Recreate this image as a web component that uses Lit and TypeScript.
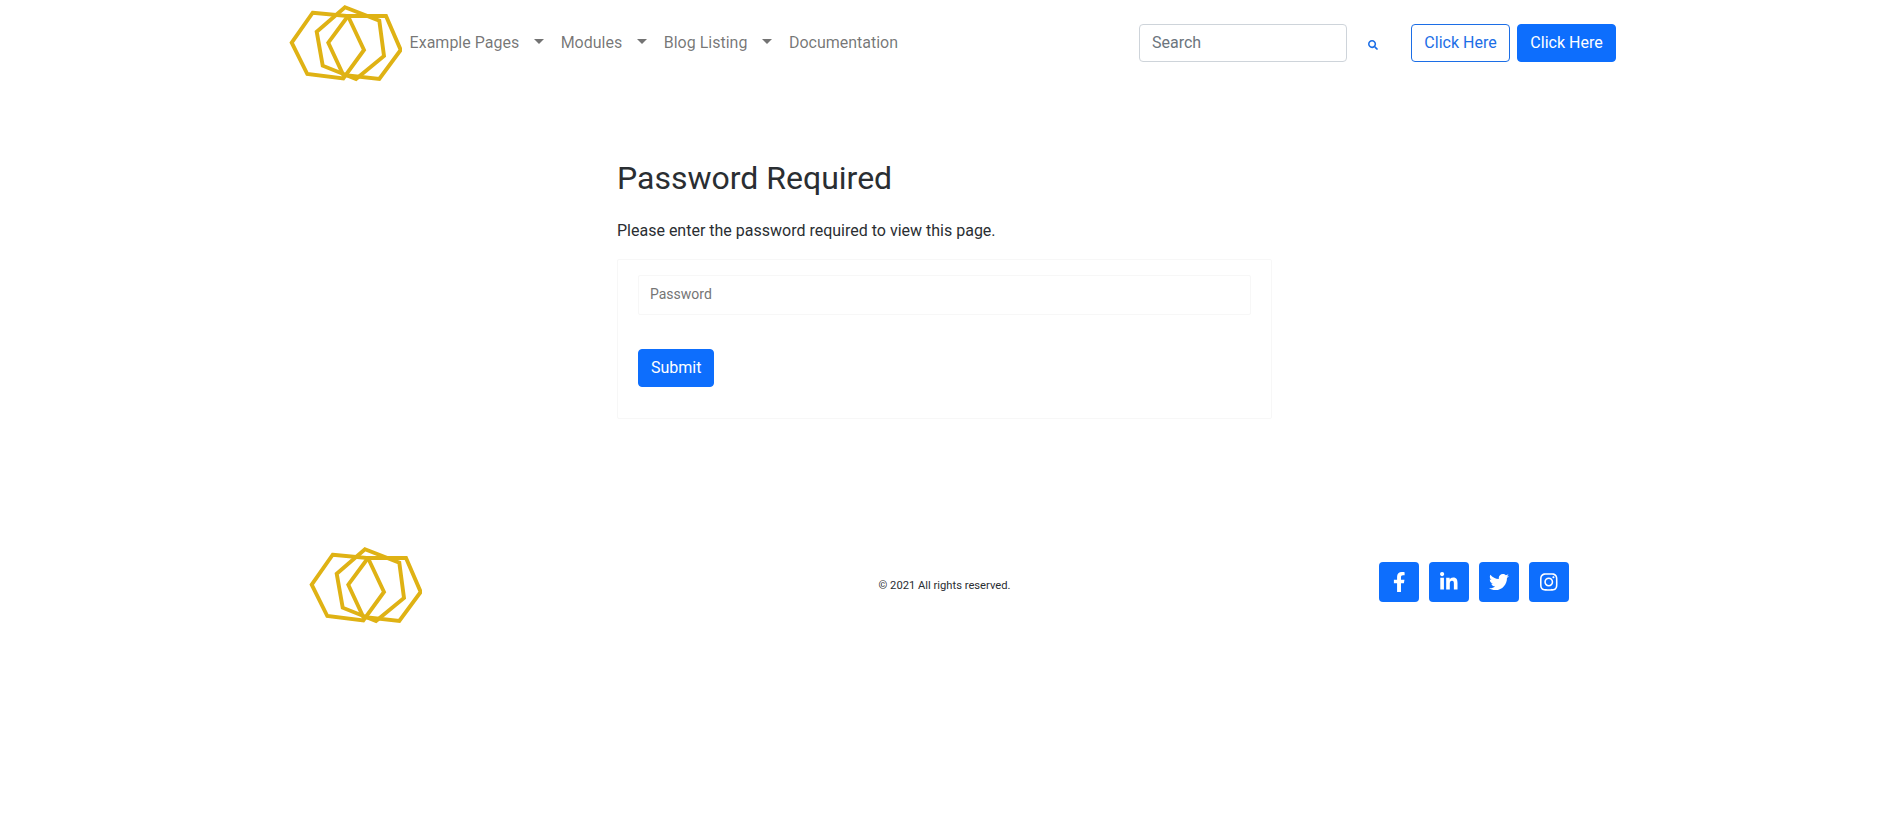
import { LitElement, html, css, svg } from "lit";
import { customElement } from "lit/decorators.js";

const logo = () => html`<svg class="logo" viewBox="285 0 117 86" aria-hidden="true">
  <g fill="none" stroke="#dfb214" stroke-width="3.9" stroke-linejoin="miter">
    ${svg`<polygon points="312.7,12.7 348,16 364,50 343.3,78.5 307.3,74 291.7,42.7" />
    <polygon points="345,7.3 379.3,20.7 384,56 356,79 322.7,65.7 316.7,31.7" />
    <polygon points="348,16 386,16 400.7,50 379.3,79 343.3,75 328.3,42.7" />`}
  </g>
</svg>`;

const icon = (vb: string, d: string, cls: string) =>
  html`<svg class=${cls} viewBox=${vb} aria-hidden="true"><path fill="currentColor" d=${d}></path></svg>`;

const SEARCH = "M505 442.7L405.3 343c-4.5-4.5-10.6-7-17-7H372c27.6-35.3 44-79.7 44-128C416 93.1 322.9 0 208 0S0 93.1 0 208s93.1 208 208 208c48.3 0 92.7-16.4 128-44v16.3c0 6.4 2.5 12.5 7 17l99.7 99.7c9.4 9.4 24.6 9.4 33.9 0l28.3-28.3c9.4-9.4 9.4-24.6.1-34zM208 336c-70.7 0-128-57.2-128-128 0-70.7 57.2-128 128-128 70.7 0 128 57.2 128 128 0 70.7-57.2 128-128 128z";
const FB = "M279.14 288l14.22-92.66h-88.91v-60.13c0-25.35 12.42-50.06 52.24-50.06h40.42V6.26S260.43 0 225.36 0c-73.22 0-121.08 44.38-121.08 124.72v70.62H22.89V288h81.39v224h100.17V288z";
const LI = "M100.28 448H7.4V148.9h92.88zM53.79 108.1C24.09 108.1 0 83.5 0 53.8a53.79 53.79 0 0 1 107.58 0c0 29.7-24.1 54.3-53.79 54.3zM447.9 448h-92.68V302.4c0-34.7-.7-79.2-48.29-79.2-48.29 0-55.69 37.7-55.69 76.7V448h-92.78V148.9h89.08v40.8h1.3c12.4-23.5 42.69-48.3 87.88-48.3 94 0 111.28 61.9 111.28 142.3V448z";
const TW = "M459.37 151.716c.325 4.548.325 9.097.325 13.645 0 138.72-105.583 298.558-298.558 298.558-59.452 0-114.68-17.219-161.137-47.106 8.447.974 16.568 1.299 25.34 1.299 49.055 0 94.213-16.568 130.274-44.832-46.132-.975-84.792-31.188-98.112-72.772 6.498.974 12.995 1.624 19.818 1.624 9.421 0 18.843-1.3 27.614-3.573-48.081-9.747-84.143-51.98-84.143-102.985v-1.299c13.969 7.797 30.214 12.67 47.431 13.319-28.264-18.843-46.781-51.005-46.781-87.391 0-19.492 5.197-37.36 14.294-52.954 51.655 63.675 129.3 105.258 216.365 109.807-1.624-7.797-2.599-15.918-2.599-24.04 0-57.828 46.782-104.934 104.934-104.934 30.213 0 57.502 12.67 76.67 33.137 23.715-4.548 46.456-13.32 66.599-25.34-7.798 24.366-24.366 44.833-46.132 57.827 21.117-2.273 41.584-8.122 60.426-16.243-14.292 20.791-32.161 39.308-52.628 54.253z";
const IG = "M224.1 141c-63.6 0-114.9 51.3-114.9 114.9s51.3 114.9 114.9 114.9S339 319.5 339 255.9 287.7 141 224.1 141zm0 189.6c-41.1 0-74.7-33.5-74.7-74.7s33.5-74.7 74.7-74.7 74.7 33.5 74.7 74.7-33.6 74.7-74.7 74.7zm146.4-194.3c0 14.9-12 26.8-26.8 26.8-14.9 0-26.8-12-26.8-26.8s12-26.8 26.8-26.8 26.8 12 26.8 26.8zm76.1 27.2c-1.7-35.9-9.9-67.7-36.2-93.9-26.2-26.2-58-34.4-93.9-36.2-37-2.1-147.9-2.1-184.9 0-35.8 1.7-67.6 9.9-93.9 36.1s-34.4 58-36.2 93.9c-2.1 37-2.1 147.9 0 184.9 1.7 35.9 9.9 67.7 36.2 93.9s58 34.4 93.9 36.2c37 2.1 147.9 2.1 184.9 0 35.9-1.7 67.7-9.9 93.9-36.2 26.2-26.2 34.4-58 36.2-93.9 2.1-37 2.1-147.8 0-184.8zM398.8 388c-7.8 19.6-22.9 34.7-42.6 42.6-29.5 11.7-99.5 9-132.1 9s-102.7 2.6-132.1-9c-19.6-7.8-34.7-22.9-42.6-42.6-11.7-29.5-9-99.5-9-132.1s-2.6-102.7 9-132.1c7.8-19.6 22.9-34.7 42.6-42.6 29.5-11.7 99.5-9 132.1-9s102.7-2.6 132.1 9c19.6 7.8 34.7 22.9 42.6 42.6 11.7 29.5 9 99.5 9 132.1s2.7 102.7-9 132.1z";

@customElement("app-root")
export class AppRoot extends LitElement {
  static styles = css`
    :host {
      display: block;
      min-height: 832px;
      background: #fff;
      color: #2a2e32;
      font-family: Roboto, "Liberation Sans", sans-serif;
      font-size: 16px;
      line-height: 24px;
    }
    * { box-sizing: border-box; }
    .top {
      display: flex;
      align-items: center;
      height: 86px;
      padding: 0 273px 0 285px;
    }
    .logo { display: block; flex: none; width: 117px; height: 86px; }
    .nav { display: flex; align-items: center; margin-top: -1px; margin-left: -0.4px; }
    .link {
      display: flex;
      align-items: center;
      padding: 8px;
      color: rgba(0, 0, 0, 0.55);
      text-decoration: none;
      white-space: nowrap;
    }
    .caret {
      flex: none;
      margin: -2px 0.5px 0 15px;
      border-top: 5px solid currentColor;
      border-left: 5.5px solid transparent;
      border-right: 5.5px solid transparent;
    }
    .actions { display: flex; align-items: center; margin-left: auto; }
    .search {
      width: 208px;
      height: 38px;
      padding: 5px 12px 7px 12px;
      border: 1px solid #ced4da;
      border-radius: 4px;
      font: inherit;
      color: #212529;
      background: #fff;
      outline: none;
    }
    input::placeholder { color: #6c757d; opacity: 1; }
    .search-btn {
      display: flex;
      margin: 3px 33px 0 21px;
      padding: 0;
      border: 0;
      background: none;
      color: #1c6ee6;
    }
    .search-icon { width: 10px; height: 10px; display: block; }
    .btn {
      display: inline-block;
      height: 38px;
      padding: 6px 12px;
      border: 1px solid #0d6efd;
      border-radius: 4px;
      background: #0d6efd;
      color: #fff;
      font: inherit;
      white-space: nowrap;
    }
    .actions .btn { width: 99px; padding: 6px 0; text-align: center; }
    .actions .btn.outline {
      background: #fff;
      color: #1c6ee6;
      border-color: #1c6ee6;
      margin-right: 7px;
    }
    main {
      width: 655px;
      margin: 0 auto;
      padding-top: 73px;
    }
    h1 {
      margin: 0 0 21.6px;
      font-size: 32px;
      font-weight: 400;
      line-height: 38.4px;
    }
    p { margin: 0 0 16px; }
    .card {
      height: 160px;
      padding: 15px 20px;
      border: 1px solid #f7f7f7;
      border-radius: 2px;
    }
    .pw {
      display: block;
      width: 100%;
      height: 40px;
      padding: 0 11px 2px;
      border: 1px solid #f7f7f7;
      border-radius: 2px;
      font: inherit;
      font-size: 14px;
      outline: none;
      background: #fff;
      margin-bottom: 34px;
    }
    .pw::placeholder { color: #757575; }
    footer {
      display: grid;
      grid-template-columns: 1fr auto 1fr;
      align-items: center;
      width: 1320px;
      height: 86px;
      margin: 122px auto 0;
      padding: 0 35.5px;
    }
    footer .logo { margin: 1px 0 -1px -15px; }
    .copy { font-size: 11.2px; line-height: 17px; margin-top: 2px; }
    .social { display: flex; gap: 10px; justify-self: end; margin-bottom: 4px; }
    .sq {
      display: flex;
      align-items: center;
      justify-content: center;
      width: 40px;
      height: 40px;
      border-radius: 4px;
      background: #0d6efd;
      color: #fff;
    }
    .ic { height: 20px; display: block; }
    .w-f { width: 12.5px; }
    .w-l { width: 17.5px; }
    .w-t { width: 20px; }
    .w-i { width: 17.5px; }
  `;

  render() {
    return html`
      <header class="top">
        ${logo()}
        <nav class="nav">
          <a class="link" href="#">Example Pages<span class="caret"></span></a>
          <a class="link" href="#">Modules<span class="caret"></span></a>
          <a class="link" href="#">Blog Listing<span class="caret"></span></a>
          <a class="link" href="#">Documentation</a>
        </nav>
        <div class="actions">
          <input class="search" type="text" placeholder="Search" />
          <button class="search-btn" aria-label="Search">${icon("0 0 512 512", SEARCH, "search-icon")}</button>
          <button class="btn outline">Click Here</button>
          <button class="btn">Click Here</button>
        </div>
      </header>
      <main>
        <h1>Password Required</h1>
        <p>Please enter the password required to view this page.</p>
        <form class="card">
          <input class="pw" type="password" placeholder="Password" />
          <button class="btn" type="button">Submit</button>
        </form>
      </main>
      <footer>
        ${logo()}
        <div class="copy">© 2021 All rights reserved.</div>
        <div class="social">
          <a class="sq" href="#" aria-label="Facebook">${icon("0 0 320 512", FB, "ic w-f")}</a>
          <a class="sq" href="#" aria-label="LinkedIn">${icon("0 0 448 512", LI, "ic w-l")}</a>
          <a class="sq" href="#" aria-label="Twitter">${icon("0 0 512 512", TW, "ic w-t")}</a>
          <a class="sq" href="#" aria-label="Instagram">${icon("0 0 448 512", IG, "ic w-i")}</a>
        </div>
      </footer>
    `;
  }
}
